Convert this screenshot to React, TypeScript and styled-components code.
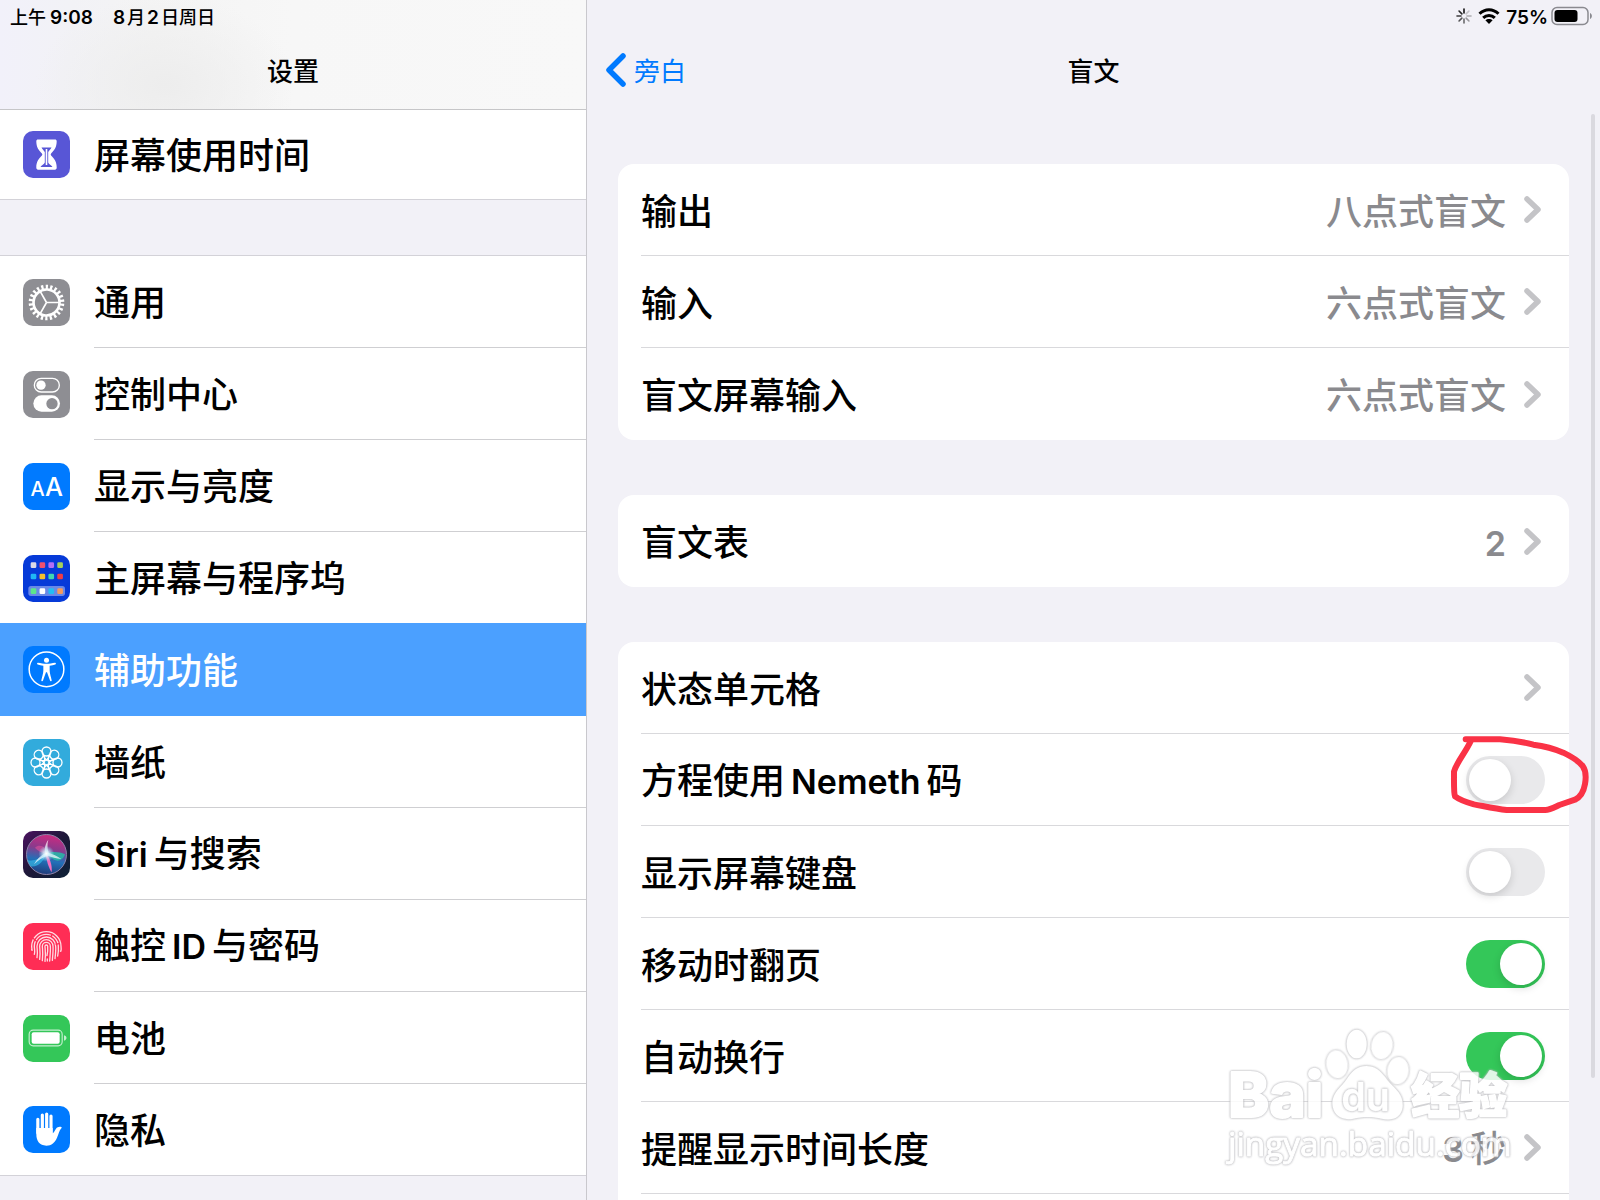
import React, { useState } from "react";
import styled, { createGlobalStyle } from "styled-components";

const cjk = `"Noto Sans CJK SC", "Noto Sans", sans-serif`;
const latin = `Inter, "Noto Sans CJK SC", sans-serif`;

const GlobalStyle = createGlobalStyle`
  * { box-sizing: border-box; }
  body { margin: 0; background: #f2f1f7; font-family: ${cjk}; color: #000; }
  button { font: inherit; color: inherit; background: none; border: 0; padding: 0; text-align: left; cursor: pointer; }
  h1, h2 { margin: 0; font: inherit; }
  a { color: inherit; text-decoration: none; }
`;

const Screen = styled.div`
  position: relative;
  display: flex;
  height: 100vh;
  overflow: hidden;
`;

const Sidebar = styled.aside`
  flex: 0 0 587px;
  display: flex;
  flex-direction: column;
  border-right: 1px solid #c9c8cd;
  overflow: hidden;
`;

const SidebarHeader = styled.header`
  flex: none;
  border-bottom: 1px solid #c6c6c8;
  background:
    radial-gradient(ellipse 130px 90px at 165px 85px, #ededed 0%, rgba(237, 237, 237, 0) 100%),
    linear-gradient(90deg, #f2f1fa 0%, #f2f2f6 12%, #f4f4f4 26%, #f7f7f7 50%, #f8f8f8 100%);
`;

const StatusBar = styled.div<{ $end?: boolean }>`
  display: flex;
  align-items: center;
  justify-content: ${(p) => (p.$end ? "flex-end" : "flex-start")};
  gap: ${(p) => (p.$end ? 0 : 16)}px;
  height: 32px;
  padding: 0 8px 0 10px;
  font-size: 18px;
  line-height: 20px;
  font-weight: 500;
`;

const NavBar = styled.div`
  display: grid;
  grid-template-columns: 1fr auto 1fr;
  align-items: center;
  height: 77px;
  padding: 0 18px 2px;
`;

const NavTitle = styled.h1`
  grid-column: 2;
  font-size: 26px;
  line-height: 32px;
  font-weight: 500;
`;

const BackLink = styled.a`
  display: flex;
  align-items: center;
  gap: 6px;
  font-size: 26px;
  line-height: 32px;
  color: #007aff;
`;

const Group = styled.nav<{ $first?: boolean }>`
  flex: none;
  background: #fff;
  border-top: ${(p) => (p.$first ? 0 : 1)}px solid #d3d2d8;
  margin-bottom: 55px;
`;

const MenuRow = styled.a<{ $selected?: boolean; $short?: boolean }>`
  position: relative;
  display: flex;
  align-items: center;
  gap: 24px;
  height: ${(p) => (p.$selected ? 93 : p.$short ? 90 : 92)}px;
  margin-top: ${(p) => (p.$selected ? -1 : 0)}px;
  padding-left: 23px;
  background: ${(p) => (p.$selected ? "#4ba0ff" : "transparent")};
  color: ${(p) => (p.$selected ? "#fff" : "#000")};
  &:last-child { border-bottom: 1px solid #d3d2d8; }
`;

const MenuLabel = styled.span<{ $line: boolean }>`
  flex: 1;
  display: flex;
  align-items: center;
  align-self: stretch;
  padding-bottom: 4px;
  border-bottom: ${(p) => (p.$line ? "1px solid #cfcfd2" : "0")};
  font-size: 36px;
  line-height: 40px;
  font-weight: 500;
`;

const Latin = styled.span<{ $lead: boolean; $size: number; $gap: number }>`
  font-family: ${latin};
  font-size: ${(p) => p.$size}px;
  line-height: 1;
  font-weight: 600;
  margin-left: ${(p) => (p.$lead ? p.$gap : 0)}px;
  margin-right: ${(p) => p.$gap}px;
`;

const Tile = styled.svg`
  flex: none;
  width: 47px;
  height: 47px;
  border-radius: 10px;
`;

const Main = styled.main`
  position: relative;
  flex: 1;
  min-width: 0;
  display: flex;
  flex-direction: column;
`;

const MainHeader = styled.header`
  flex: none;
  height: 110px;
`;

const Cards = styled.div`
  flex: 1;
  display: flex;
  flex-direction: column;
  gap: 55px;
  padding: 54px 31px 0;
`;

const Card = styled.section<{ $open?: boolean }>`
  flex: ${(p) => (p.$open ? "1 0 auto" : "none")};
  padding-left: 23px;
  background: #fff;
  border-radius: ${(p) => (p.$open ? "16px 16px 0 0" : "16px")};
`;

const rowBox = `
  position: relative;
  display: flex;
  align-items: center;
  justify-content: space-between;
  width: 100%;
  height: 92px;
  padding-right: 24px;
  border-bottom: 1px solid #d9d9dc;
  font-size: 36px;
  line-height: 40px;
  font-weight: 500;
`;

const LinkRow = styled.button<{ $last?: boolean }>`
  && { ${rowBox} }
  && { border-bottom-width: ${(p) => (p.$last ? 0 : 1)}px; }
`;

const SwitchRow = styled.label`
  ${rowBox}
`;

const RowText = styled.span`
  padding-bottom: 2px;
`;

const Trailing = styled.span`
  display: flex;
  align-items: center;
  gap: 18px;
  color: #8a8a8e;
`;

const Switch = styled.input`
  appearance: none;
  flex: none;
  display: flex;
  align-items: center;
  width: 79px;
  height: 48px;
  margin: 0;
  padding: 0 3px;
  border-radius: 24px;
  background: #e9e9eb;
  cursor: pointer;
  &::before {
    content: "";
    width: 42px;
    height: 42px;
    border-radius: 50%;
    background: #fff;
    box-shadow: 0 3px 8px rgba(0, 0, 0, 0.15);
  }
  &:checked { background: #34c759; justify-content: flex-end; }
`;

const HandMark = styled.svg`
  position: absolute;
  right: -22px;
  top: -2px;
  width: 144px;
  height: 84px;
  overflow: visible;
  pointer-events: none;
`;

const ScrollThumb = styled.div`
  position: absolute;
  top: 114px;
  bottom: 122px;
  right: 5px;
  width: 4px;
  border-radius: 2px;
  background: #dad9df;
`;

const Watermark = styled.svg`
  position: absolute;
  right: 80px;
  bottom: 25px;
  width: 300px;
  height: 150px;
  pointer-events: none;
  opacity: 0.85;
  & > * {
    fill: #fff;
    stroke: #fff;
    stroke-linejoin: round;
    filter: drop-shadow(0 0 3px #b4b4b8) drop-shadow(0 0 1px #c4c4c8);
  }
`;

const StatusIcon = styled.svg<{ $w: number; $gap: number }>`
  width: ${(p) => p.$w}px;
  height: 20px;
  margin-right: ${(p) => p.$gap}px;
`;

function Mixed({ text, size = 34, gap = 6 }: { text: string; size?: number; gap?: number }) {
  return (
    <span>
      {text.split(/([A-Za-z0-9:%]+)/).map((part, i) =>
        i % 2 ? (
          <Latin key={i} $lead={text.indexOf(part) > 0} $size={size} $gap={gap}>{part}</Latin>
        ) : (
          part
        )
      )}
    </span>
  );
}

const HourglassIcon = () => (
  <Tile viewBox="0 0 47 47">
    <rect width="47" height="47" fill="#5856d6" />
    <path fill="#fff" d="M15 8.500h17c1 0 1.700.7 1.700 1.700 0 6-2.400 9-5.600 12.300-.5.600-.5 1.500 0 2.100 3.200 3.200 5.600 6.200 5.600 12.200 0 1.100-.7 1.900-1.700 1.900H15c-1 0-1.700-.8-1.700-1.900 0-6 2.400-9 5.600-12.200.5-.6.5-1.500 0-2.100-3.200-3.300-5.600-6.300-5.600-12.300 0-1 .7-1.700 1.700-1.700z" />
    <path fill="#5856d6" d="M18.500 16.500h10c-.8 1.700-2.400 3-3.300 4.500v10.500c.6 2 3.300 2.300 4.300 4.500h-12c1-2.200 3.700-2.500 4.300-4.500V21c-.9-1.500-2.500-2.800-3.300-4.500z" />
    <path stroke="#fff" strokeWidth="1.600" d="M23.500 18v16" />
  </Tile>
);

const GearIcon = () => (
  <Tile viewBox="0 0 141 141">
    <rect width="141" height="141" fill="#8e8e93" />
    <g fill="none" stroke="#fff" transform="rotate(4 70.500 70.500)">
      <circle cx="70.500" cy="70.500" r="47" strokeWidth="13" pathLength="220" strokeDasharray="5 5" />
      <circle cx="70.500" cy="70.500" r="39" strokeWidth="8" />
    </g>
    <path fill="none" stroke="#fff" strokeWidth="5" d="M70.500 70.500H108M70.500 70.500L52 38M70.500 70.500L52 103" />
  </Tile>
);

const ControlIcon = () => (
  <Tile viewBox="0 0 141 141">
    <rect width="141" height="141" fill="#8e8e93" />
    <rect x="34" y="22" width="75" height="41" rx="20.500" fill="none" stroke="#fff" strokeWidth="4" />
    <circle cx="54" cy="42.500" r="14" fill="#fff" />
    <rect x="31" y="73" width="80" height="49" rx="24.500" fill="#fff" />
    <circle cx="87" cy="98" r="17" fill="#8e8e93" />
  </Tile>
);

const DisplayIcon = () => (
  <Tile viewBox="0 0 141 141">
    <rect width="141" height="141" fill="#007aff" />
    <g fill="#fff" fontFamily="Inter, sans-serif" fontWeight="500" textAnchor="middle">
      <text x="44" y="100" fontSize="60">A</text>
      <text x="93" y="100" fontSize="76">A</text>
    </g>
  </Tile>
);

const homeColors = [
  ["#d9d9e6", "#f0506e", "#b46ef5", "#a5d05a"],
  ["#1fb6f5", "#f5c12e", "#3fd6b0", "#f03c46"],
  ["#5ce68a", "#ffffff", "#22bdf5", "#f59a5c"],
];

const HomeIcon = () => (
  <Tile viewBox="0 0 141 141">
    <rect width="141" height="141" fill="#063ad8" />
    <rect x="16" y="93" width="110" height="30" rx="8" fill="#fff" opacity=".4" />
    {homeColors.map((row, r) =>
      row.map((c, i) => <rect key={`${r}${i}`} x={23 + i * 26.600} y={[22, 56, 100][r]} width="17" height="17" rx="4" fill={c} />)
    )}
  </Tile>
);

const AccessIcon = () => (
  <Tile viewBox="0 0 141 141">
    <rect width="141" height="141" fill="#007aff" />
    <circle cx="70.500" cy="70" r="52" fill="none" stroke="#fff" strokeWidth="4.500" />
    <circle cx="70.500" cy="43" r="7.500" fill="#fff" />
    <path fill="#fff" d="M45 50.500c8 1.500 17 3 25.500 3s17.500-1.500 25.500-3c3-.5 4 4 1 5-5 1.500-11 3-17 4v14c0 9 4 19 6 29 .6 3-4 4.200-5 1.200L72 79h-3l-9 24.700c-1 3-5.600 1.800-5-1.200 2-10 6-20 6-29v-14c-6-1-12-2.500-17-4-3-1-2-5.500 1-5z" />
  </Tile>
);

const WallpaperIcon = () => (
  <Tile viewBox="0 0 141 141">
    <rect width="141" height="141" fill="#32abdc" />
    <g fill="none" stroke="#fff" strokeWidth="4">
      {Array.from({ length: 8 }, (_, i) => (
        <g key={i} transform={`rotate(${i * 45} 70.500 70.500)`}>
          <circle cx="70.500" cy="37.500" r="13.500" />
          <path d="M60 46C60 54 66 57 70.500 63C75 57 81 54 81 46" />
        </g>
      ))}
      <circle cx="70.500" cy="70.500" r="8" />
    </g>
  </Tile>
);

const SiriIcon = () => (
  <Tile viewBox="0 0 141 141">
    <defs>
      <linearGradient id="siri-bg" x1="0" y1="0" x2="1" y2="1">
        <stop offset="0" stopColor="#4b1260" />
        <stop offset=".5" stopColor="#1d1838" />
        <stop offset="1" stopColor="#0d2136" />
      </linearGradient>
      <linearGradient id="siri-orb" x1=".55" y1="0" x2=".4" y2="1">
        <stop offset="0" stopColor="#cc2a80" />
        <stop offset=".35" stopColor="#8a3a8c" />
        <stop offset=".65" stopColor="#2270b8" />
        <stop offset="1" stopColor="#213a78" />
      </linearGradient>
      <radialGradient id="siri-glow">
        <stop offset="0" stopColor="#fff" />
        <stop offset=".35" stopColor="#d8f6ff" stopOpacity=".8" />
        <stop offset="1" stopColor="#8fe8ff" stopOpacity="0" />
      </radialGradient>
    </defs>
    <rect width="141" height="141" fill="url(#siri-bg)" />
    <circle cx="70.500" cy="70.500" r="60" fill="url(#siri-orb)" stroke="#8d83a8" strokeWidth="3" />
    <path fill="#1fc8a8" opacity=".75" d="M70 68c18-8 38-6 56 2-4 14-16 22-28 18-10-3-16-14-28-20z" />
    <path fill="#e0509a" opacity=".6" d="M36 50c14-14 34-2 38 16-14 2-28-4-38-16z" />
    <path fill="#39c6f0" opacity=".6" d="M12 86c18 8 40-4 58-20-6 24-26 44-48 40z" />
    <path fill="#f06fc0" d="M68 66c12 14 20 34 18 58-8-12-16-34-18-58z" />
    <path fill="#fff" opacity=".7" d="M76 26c-4 14-3 28 1 40 12 4 26 9 38 18-16-3-30-5-40-10-14 4-28 12-42 26 8-16 20-26 34-34-4-12 0-28 9-40z" />
    <circle cx="70" cy="68" r="24" fill="url(#siri-glow)" />
  </Tile>
);

const ridges = [
  [44, 80, 84],
  [36, 94, 99],
  [28, 104, 107],
  [20, 109, 112],
  [12, 113, 114],
  [4, 115, 98],
];

const TouchIcon = () => (
  <Tile viewBox="0 0 141 141">
    <rect width="141" height="141" fill="#ff2d55" />
    <g fill="none" stroke="#ffdbe2" strokeWidth="4" strokeLinecap="round">
      {ridges.map(([r, left, right]) => (
        <path key={r} d={`M${70 - r} ${left}C${73 - r} 86 ${70 - r} 78 ${70 - r} 70A${r} ${r} 0 0 1 ${70 + r} 70C${71 + r} 80 ${70 + r} 88 ${68 + r} ${right}`} />
      ))}
      <path d="M73 108v6" />
    </g>
    <path stroke="#ff2d55" strokeWidth="4" d="M30 46l12 10M88 32l-4 10M108 62l-10 2" />
  </Tile>
);

const BatteryIcon = () => (
  <Tile viewBox="0 0 141 141">
    <rect width="141" height="141" fill="#34c759" />
    <rect x="18.500" y="45.500" width="99" height="47" rx="12" fill="none" stroke="#c4efcf" strokeWidth="3.500" />
    <rect x="26" y="52" width="84" height="34" rx="6" fill="#fff" />
    <path fill="#c4efcf" d="M123 61c10 2 10 14 0 16z" />
  </Tile>
);

const HandIcon = () => (
  <Tile viewBox="0 0 141 141">
    <rect width="141" height="141" fill="#007aff" />
    <g stroke="#fff" strokeLinecap="round" strokeWidth="9.500">
      <path d="M44.500 40V80M58 27V80M71 24V80M84 30V80" />
    </g>
    <path fill="#fff" d="M39.700 66H89v16c3-1 6-8 10-14 4-5 10-7 16-5 2 1 1 3-1 5-5 5-7 16-12 27-6 14-16 24-32 24-20 0-30-14-30-34z" />
  </Tile>
);

const Chevron = () => (
  <svg width="21" height="27" viewBox="0 0 21 27" fill="none" stroke="#c4c4c7" strokeWidth="5.500" strokeLinecap="round" strokeLinejoin="round" aria-hidden>
    <path d="M3 3l11 10.500L3 24" />
  </svg>
);

const menu = [
  { label: "通用", Icon: GearIcon },
  { label: "控制中心", Icon: ControlIcon },
  { label: "显示与亮度", Icon: DisplayIcon },
  { label: "主屏幕与程序坞", Icon: HomeIcon },
  { label: "辅助功能", Icon: AccessIcon, selected: true },
  { label: "墙纸", Icon: WallpaperIcon },
  { label: "Siri与搜索", Icon: SiriIcon },
  { label: "触控ID与密码", Icon: TouchIcon },
  { label: "电池", Icon: BatteryIcon },
  { label: "隐私", Icon: HandIcon },
];

const outputs = [
  { label: "输出", value: "八点式盲文" },
  { label: "输入", value: "六点式盲文" },
  { label: "盲文屏幕输入", value: "六点式盲文" },
];

const switches = [
  { id: "nemeth", label: "方程使用Nemeth码", on: false, marked: true },
  { id: "keyboard", label: "显示屏幕键盘", on: false },
  { id: "turn", label: "移动时翻页", on: true },
  { id: "wrap", label: "自动换行", on: true },
];

function SettingLink({ label, value, last }: { label: string; value?: string; last?: boolean }) {
  return (
    <LinkRow type="button" $last={last}>
      <RowText><Mixed text={label} /></RowText>
      <Trailing>
        {value && <RowText><Mixed text={value} gap={value.length > 1 ? 6 : 0} /></RowText>}
        <Chevron />
      </Trailing>
    </LinkRow>
  );
}

function SettingSwitch({ id, label, on, marked }: { id: string; label: string; on: boolean; marked?: boolean }) {
  const [checked, setChecked] = useState(on);
  return (
    <SwitchRow htmlFor={id}>
      <RowText><Mixed text={label} /></RowText>
      <Switch id={id} type="checkbox" role="switch" checked={checked} onChange={() => setChecked(!checked)} />
      {marked && (
        <HandMark viewBox="141 66 432 252" aria-hidden>
          <path
            d="M197 88H300C340 91 370 96 400 104C440 109 465 117 490 128C515 140 535 152 548 168C558 182 558 205 555 222C551 245 540 262 525 269L478 285C465 291 450 300 436 300H320C285 296 250 288 222 283C200 277 180 270 165 259C161 250 162 220 162 185C168 160 195 130 212 94"
            fill="none" stroke="#fa3246" strokeWidth="18" strokeLinecap="round" strokeLinejoin="round"
          />
        </HandMark>
      )}
    </SwitchRow>
  );
}

export default function App() {
  return (
    <Screen>
      <GlobalStyle />
      <Sidebar>
        <SidebarHeader>
          <StatusBar>
            <Mixed text="上午9:08" size={19} gap={4} />
            <Mixed text="8月2日周日" size={19} gap={2} />
          </StatusBar>
          <NavBar><NavTitle>设置</NavTitle></NavBar>
        </SidebarHeader>
        <Group $first>
          <MenuRow href="#screen-time" $short>
            <HourglassIcon />
            <MenuLabel $line={false}>屏幕使用时间</MenuLabel>
          </MenuRow>
        </Group>
        <Group>
          {menu.map(({ label, Icon, selected }, i) => (
            <MenuRow key={label} href={`#item-${i}`} $selected={selected}>
              <Icon />
              <MenuLabel $line={!selected && i < menu.length - 1}><Mixed text={label} /></MenuLabel>
            </MenuRow>
          ))}
        </Group>
      </Sidebar>
      <Main>
        <MainHeader>
          <StatusBar $end>
            <StatusIcon $w={16} $gap={6} viewBox="0 0 16 20" stroke="#111" strokeWidth="1.600" strokeLinecap="round">
              {[1, 0.2, 0.3, 0.4, 0.6, 0.7, 0.8, 0.9].map((o, i) => (
                <path key={i} d="M8 3v4" opacity={o} transform={`rotate(${i * 45} 8 10)`} />
              ))}
            </StatusIcon>
            <StatusIcon $w={22} $gap={6} viewBox="0 0 22 20" fill="none" stroke="#000" strokeWidth="3">
              <path d="M1.500 7.800C7 2.300 15 2.300 20.500 7.800M5.200 11.800C8.500 8.600 13.500 8.600 16.800 11.800" />
              <path fill="#000" stroke="none" d="M11 18l-3.600-3.700c2-1.900 5.200-1.900 7.200 0z" />
            </StatusIcon>
            <Mixed text="75%" size={19} gap={3} />
            <StatusIcon $w={41} $gap={0} viewBox="0 0 41 20">
              <rect x="1" y="1.500" width="36" height="17" rx="5" fill="none" stroke="#8a8a90" strokeWidth="1.500" />
              <rect x="3.500" y="4" width="23" height="12" rx="3" />
              <path fill="#8a8a90" d="M39 7c2.500 1 2.500 5 0 6z" />
            </StatusIcon>
          </StatusBar>
          <NavBar>
            <BackLink href="#voiceover">
              <svg width="23" height="34" viewBox="0 0 23 34" fill="none" stroke="#007aff" strokeWidth="5.500" strokeLinecap="round" strokeLinejoin="round" aria-hidden>
                <path d="M18 3L4 17l14 14" />
              </svg>
              旁白
            </BackLink>
            <NavTitle as="h2">盲文</NavTitle>
          </NavBar>
        </MainHeader>
        <Cards>
          <Card>
            {outputs.map((o, i) => <SettingLink key={o.label} {...o} last={i === outputs.length - 1} />)}
          </Card>
          <Card><SettingLink label="盲文表" value="2" last /></Card>
          <Card $open>
            <SettingLink label="状态单元格" />
            {switches.map((s) => <SettingSwitch key={s.id} {...s} />)}
            <SettingLink label="提醒显示时间长度" value="3秒" />
          </Card>
        </Cards>
        <ScrollThumb />
      </Main>
      <Watermark viewBox="60 45 900 450" aria-hidden>
        <ellipse cx="470" cy="102" rx="30" ry="43" />
        <ellipse cx="546" cy="107" rx="32" ry="41" transform="rotate(10 546 107)" />
        <ellipse cx="411" cy="163" rx="32" ry="42" transform="rotate(-8 411 163)" />
        <ellipse cx="594" cy="182" rx="32" ry="41" transform="rotate(6 594 182)" />
        <path d="M500 168C535 168 550 195 570 220C590 240 610 255 608 290C604 325 575 333 545 326C515 318 485 320 460 326C425 333 398 315 397 280C398 245 425 232 440 208C455 185 470 168 500 168Z" />
        <text x="84" y="322" fontFamily="Inter, sans-serif" fontWeight="800" fontSize="186" strokeWidth="6">Bai</text>
        <text x="424" y="303" fontFamily="Inter, sans-serif" fontWeight="600" fontSize="118">du</text>
        <text x="634" y="310" fontFamily="Noto Sans CJK SC, sans-serif" fontWeight="900" fontSize="144" strokeWidth="6">经验</text>
        <text x="84" y="437" fontFamily="Open Sans, sans-serif" fontWeight="400" fontSize="100" strokeWidth="3">jingyan.baidu.com</text>
      </Watermark>
    </Screen>
  );
}
